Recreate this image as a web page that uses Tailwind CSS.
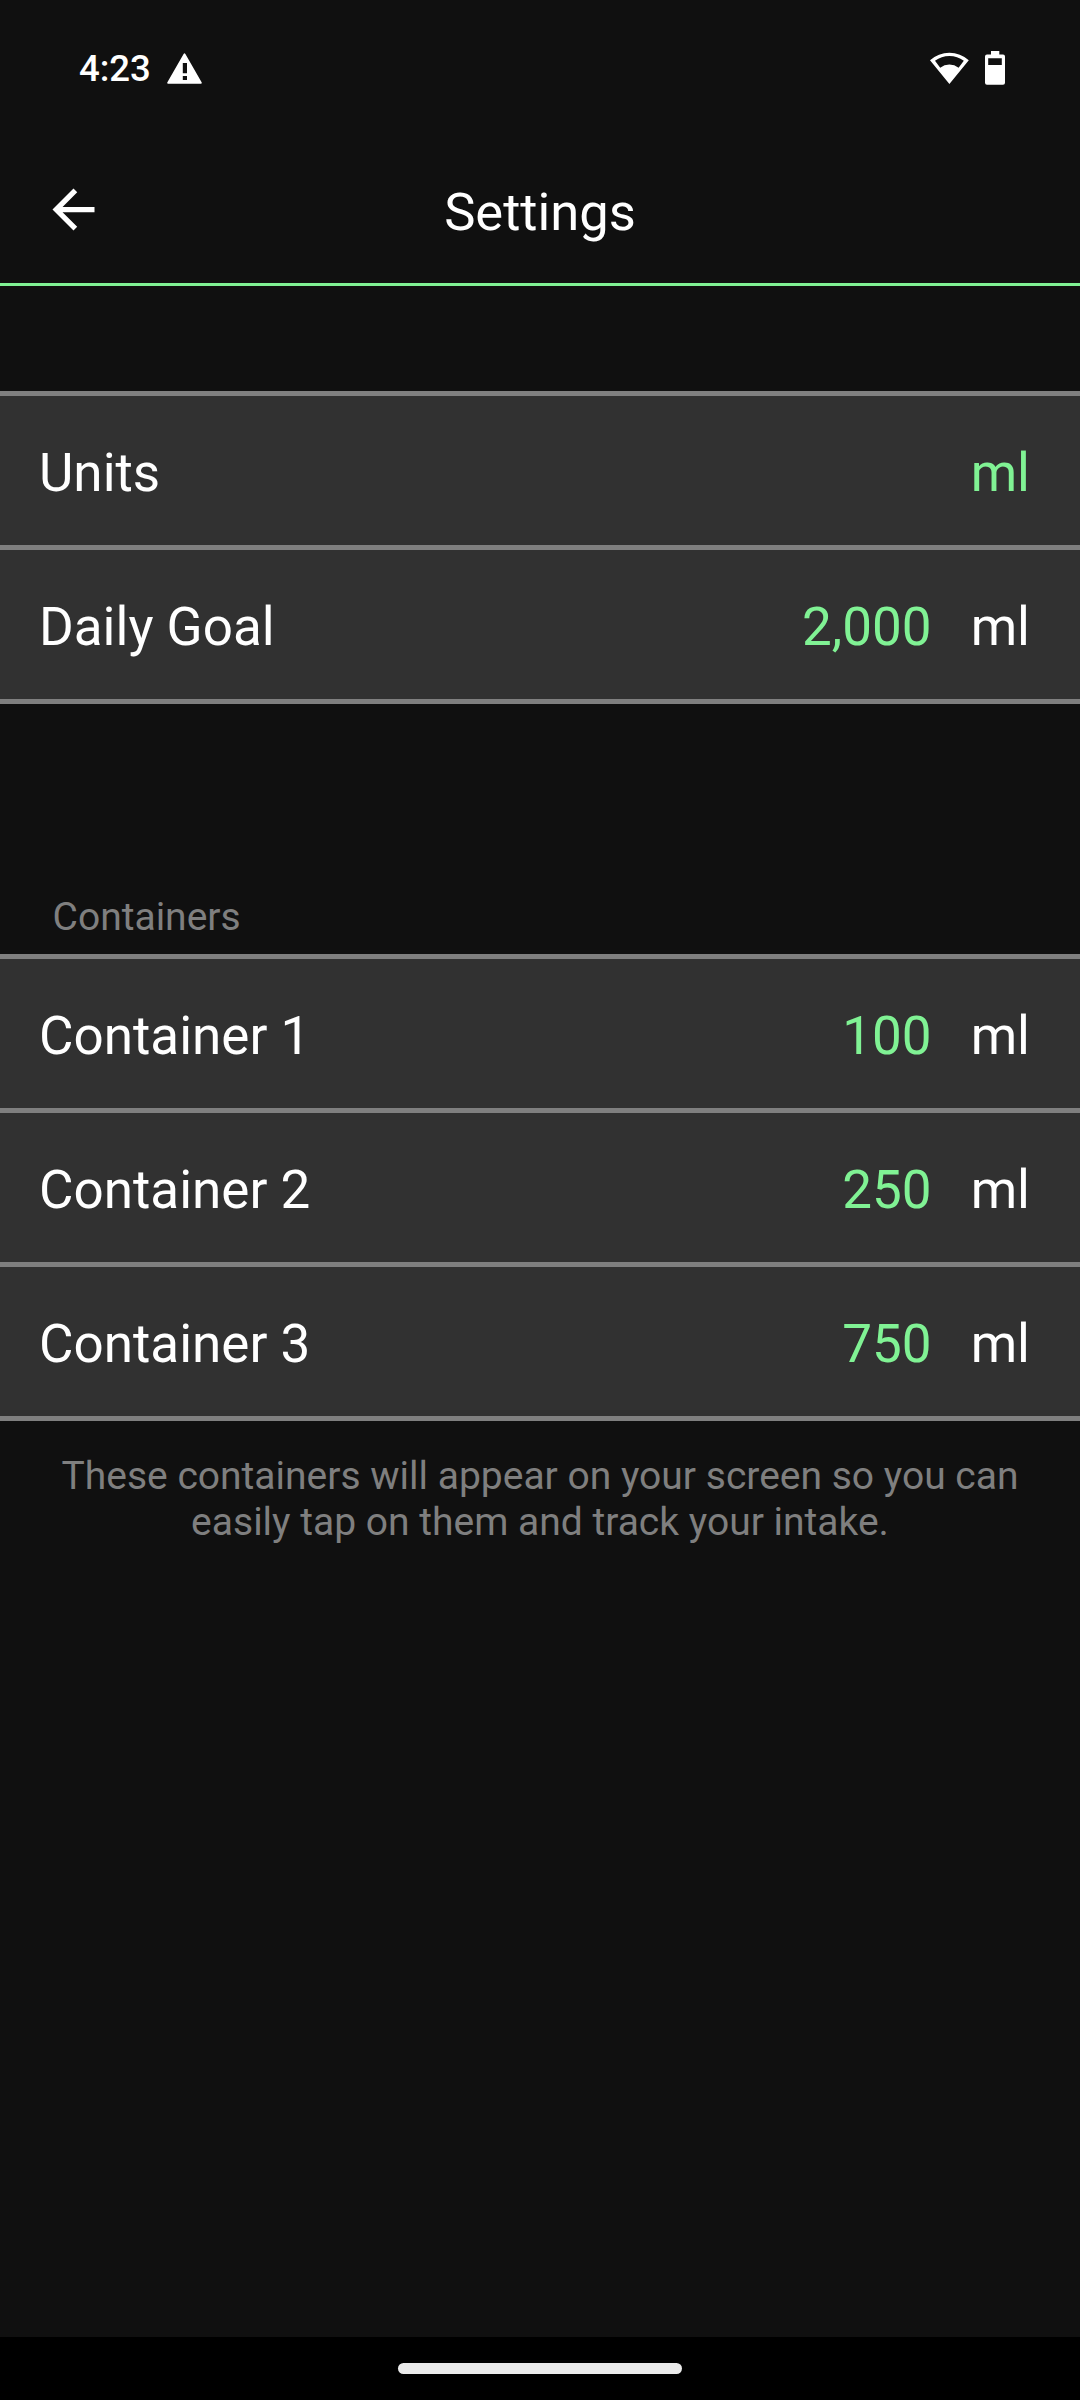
<!DOCTYPE html>
<html lang="en">
<head>
<meta charset="utf-8">
<title>Settings</title>
<script src="https://cdn.jsdelivr.net/npm/@tailwindcss/browser@4"></script>
</head>
<body class="bg-[#101010]">
<div class="flex h-[2400px] w-[1080px] flex-col overflow-hidden bg-[#101010] font-[Roboto,sans-serif] text-[53px] leading-[62px] text-white">

  <!-- Status bar -->
  <div class="flex h-[136px] shrink-0 items-center justify-between pl-[79px] pr-[75px]">
    <div class="flex items-center gap-4">
      <span class="w-[72px] whitespace-nowrap pt-0.5 text-[36.5px] font-medium leading-[42px]">4:23</span>
      <svg class="h-[31px] w-[35px]" viewBox="0 0 35 31" fill="#fff"><path fill-rule="evenodd" d="M16.6 .9Q17.5-.4 18.4 .9L34.6 29.3Q35.3 30.7 33.8 30.7H1.2Q-.3 30.7.4 29.3ZM15.8 10V20.3H20V10ZM15.8 23V27H20V23Z"/></svg>
    </div>
    <div class="flex items-center gap-4">
      <svg class="h-[34px] w-[39px]" viewBox="0 0 39 34" fill="#fff"><path fill-rule="evenodd" d="M19.4 33 0 9.3A29 29 0 0 1 38.8 9.3ZM5 9.7 10.2 16.7A15 15 0 0 1 28.6 16.7L33.8 9.7A24 24 0 0 0 5 9.7Z"/></svg>
      <svg class="h-[34px] w-5" viewBox="0 0 20 34" fill="#fff"><path fill-rule="evenodd" d="M6 0H14.3V3.6H18Q20 3.6 20 5.6V31.7Q20 33.7 18 33.7H2Q0 33.7 0 31.7V5.6Q0 3.6 2 3.6H6ZM3.2 7.2V14H16.8V7.2Z"/></svg>
    </div>
  </div>

  <!-- App bar -->
  <header class="grid h-[150px] shrink-0 grid-cols-[1fr_auto_1fr] items-start border-b-[3px] border-[#80f294] pt-[42px]">
    <svg class="ml-[42px] h-[63px] w-[63px]" viewBox="0 0 24 24" fill="#fff"><path d="M20 11H7.83l5.59-5.59L12 4l-8 8 8 8 1.41-1.41L7.83 13H20v-2z"/></svg>
    <h1 class="pt-[3px] text-[52.5px]">Settings</h1>
  </header>

  <!-- General -->
  <section class="mt-[105px] shrink-0 border-t-[5px] border-[#7f7f7f] bg-[#313131]">
    <div class="flex h-[154px] justify-between border-b-[5px] border-[#7f7f7f] pl-[39px] pr-[50px] pt-[46px]">
      <span>Units</span><span class="text-[#80f294]">ml</span>
    </div>
    <div class="flex h-[154px] border-b-[5px] border-[#7f7f7f] pl-[39px] pr-[50px] pt-[46px]">
      <span class="grow">Daily Goal</span><span class="mr-[39px] text-[#80f294]">2,000</span><span>ml</span>
    </div>
  </section>

  <!-- Containers -->
  <h2 class="mt-[190px] pl-[52.5px] text-[39px] leading-[46px] text-[#7f7f7f]">Containers</h2>
  <section class="mt-[14px] shrink-0 border-t-[5px] border-[#7f7f7f] bg-[#313131]">
    <div class="flex h-[154px] border-b-[5px] border-[#7f7f7f] pl-[39px] pr-[50px] pt-[46px]">
      <span class="grow">Container 1</span><span class="mr-[39px] text-[#80f294]">100</span><span>ml</span>
    </div>
    <div class="flex h-[154px] border-b-[5px] border-[#7f7f7f] pl-[39px] pr-[50px] pt-[46px]">
      <span class="grow">Container 2</span><span class="mr-[39px] text-[#80f294]">250</span><span>ml</span>
    </div>
    <div class="flex h-[154px] border-b-[5px] border-[#7f7f7f] pl-[39px] pr-[50px] pt-[46px]">
      <span class="grow">Container 3</span><span class="mr-[39px] text-[#80f294]">750</span><span>ml</span>
    </div>
  </section>
  <p class="mt-8 px-[52px] text-center text-[39px] leading-[46px] text-[#7f7f7f]">These containers will appear on your screen so you can easily tap on them and track your intake.</p>

  <!-- Gesture bar -->
  <div class="mt-auto flex h-[63px] shrink-0 justify-center bg-black pt-[26px]">
    <div class="h-[11px] w-[284px] rounded-full bg-[#ebebeb]"></div>
  </div>
</div>
</body>
</html>
